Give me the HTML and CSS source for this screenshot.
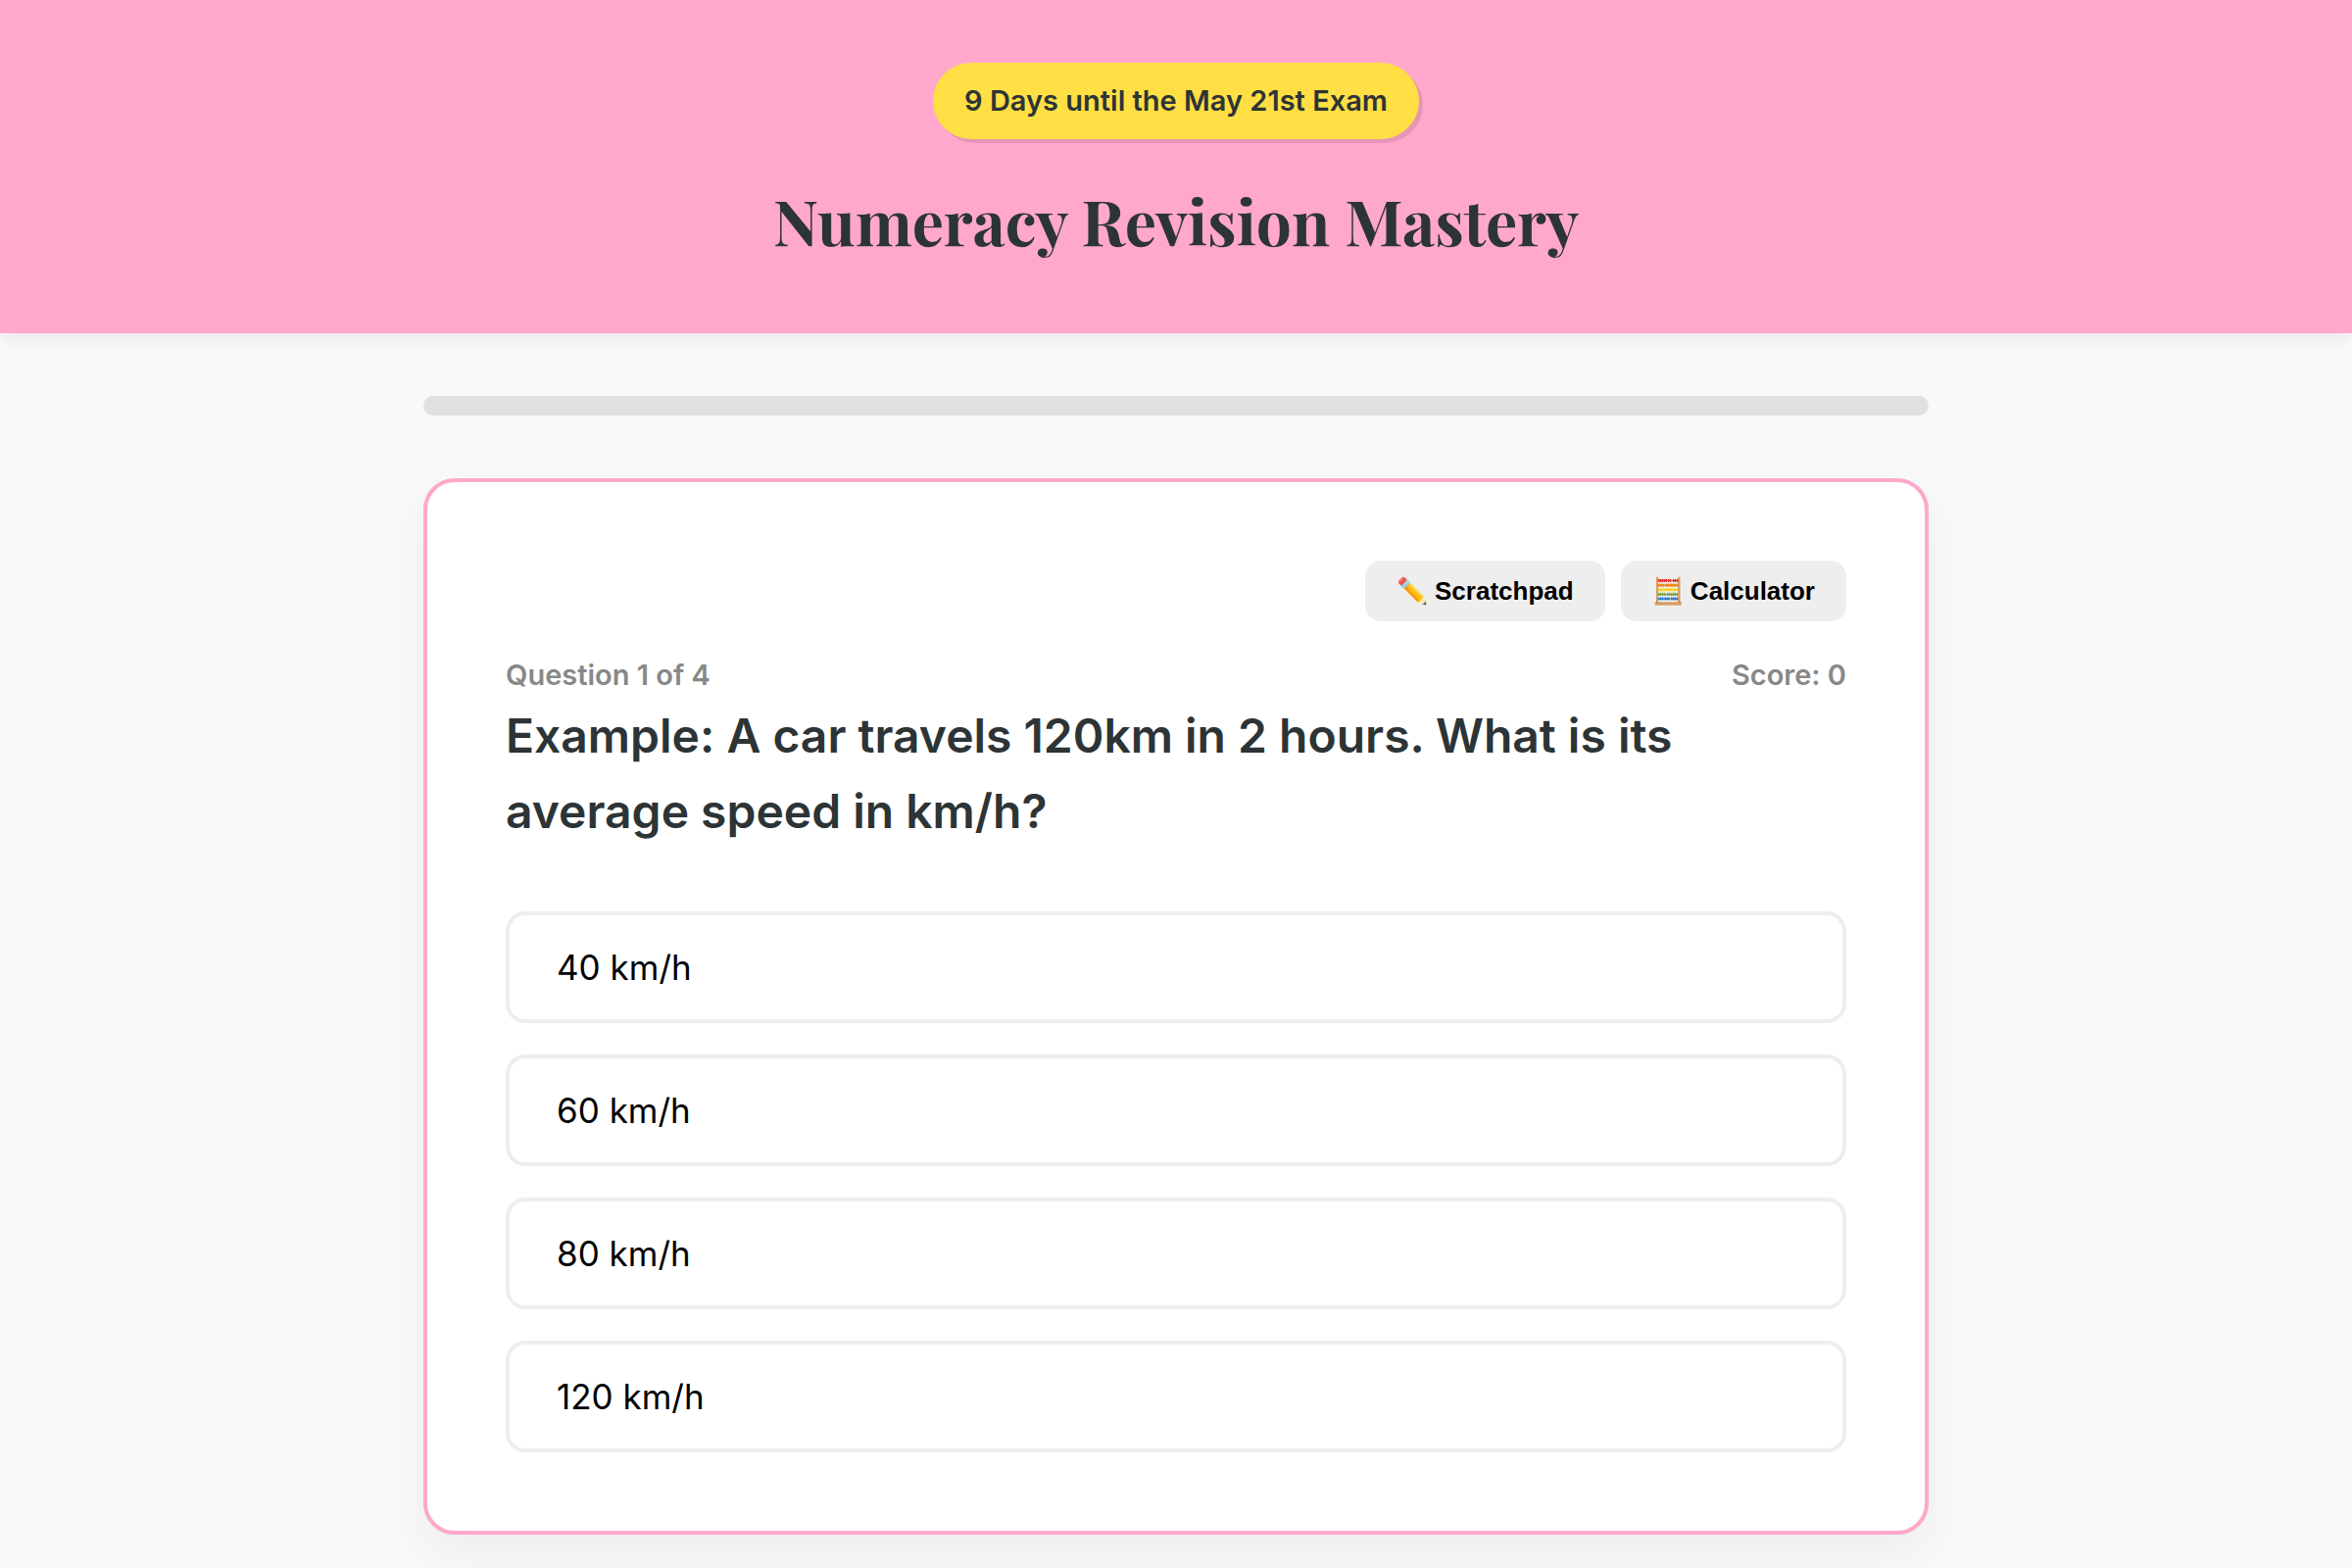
FILE: index.html
```
<!DOCTYPE html>
<html lang="en">
<head>
  <meta charset="UTF-8">
  <meta name="viewport" content="width=device-width, initial-scale=1.0">
  <title>Numeracy Revision Mastery</title>
  <link rel="stylesheet" href="styles.css">
</head>
<body>

  <header>
    <div class="countdown">9 Days until the May 21st Exam</div>
    <h1>Numeracy Revision Mastery</h1>
  </header>

  <main class="container">

    <div class="progress-bar" role="progressbar" aria-label="Quiz progress" aria-valuenow="0" aria-valuemin="0" aria-valuemax="4">
      <div class="progress-fill" style="width: 0%;"></div>
    </div>

    <section class="quiz-card">

      <div class="tools">
        <button type="button" class="tool-btn">✏️ Scratchpad</button>
        <button type="button" class="tool-btn">🧮 Calculator</button>
      </div>

      <div class="quiz-meta">
        <span>Question 1 of 4</span>
        <span>Score: 0</span>
      </div>

      <h2 class="question">Example: A car travels 120km in 2 hours. What is its average speed in km/h?</h2>

      <div class="options">
        <button type="button" class="option-btn">40 km/h</button>
        <button type="button" class="option-btn">60 km/h</button>
        <button type="button" class="option-btn">80 km/h</button>
        <button type="button" class="option-btn">120 km/h</button>
      </div>

    </section>

  </main>

</body>
</html>
```
FILE: styles.css
```
:root {
  --pink: #ffa8cb;
  --yellow: #ffdf43;
  --dark: #2d3436;
  --light: #f9f9f9;
}

* {
  box-sizing: border-box;
}

body {
  margin: 0;
  min-height: 100vh;
  font-family: 'Inter', sans-serif;
  background-color: var(--light);
  color: var(--dark);
}

header {
  background-color: var(--pink);
  padding: 64px 32px;
  display: flex;
  flex-direction: column;
  align-items: center;
  gap: 32px;
  text-align: center;
  box-shadow: 0 8px 12px rgba(0, 0, 0, 0.05);
}

.countdown {
  background-color: var(--yellow);
  padding: 16px 32px;
  border-radius: 40px;
  font-size: 29px;
  font-weight: 600;
  line-height: 46px;
  box-shadow: 4px 4px 0 rgba(0, 0, 0, 0.1);
}

h1 {
  font-family: 'Playfair Display', 'Liberation Serif', serif;
  font-size: 64px;
  font-weight: 700;
  line-height: 102px;
  margin: 0;
}

.container {
  max-width: 1600px;
  margin: 0 auto;
  padding: 64px 32px 32px;
}

.progress-bar {
  height: 20px;
  background-color: #e0e0e0;
  border-radius: 10px;
  margin-bottom: 64px;
  overflow: hidden;
}

.progress-fill {
  height: 100%;
  background-color: var(--yellow);
  transition: width 0.3s;
}

.quiz-card {
  background-color: #fff;
  border: 4px solid var(--pink);
  border-radius: 32px;
  padding: 80px;
  box-shadow: 0 20px 50px rgba(0, 0, 0, 0.05);
}

.tools {
  display: flex;
  flex-wrap: wrap;
  justify-content: flex-end;
  gap: 16px;
  margin-bottom: 32px;
}

.tool-btn {
  font-family: 'Liberation Sans', Arial, sans-serif;
  font-size: 26px;
  font-weight: 700;
  line-height: 30px;
  color: #000;
  background-color: #eee;
  border: none;
  border-radius: 16px;
  padding: 16px 32px;
  cursor: pointer;
}

.quiz-meta {
  display: flex;
  justify-content: space-between;
  font-size: 29px;
  font-weight: 600;
  line-height: 46px;
  color: #888;
}

.question {
  font-size: 48px;
  font-weight: 600;
  line-height: 77px;
  margin: 0 0 64px;
}

.options {
  display: grid;
  gap: 32px;
}

.option-btn {
  font-family: inherit;
  font-size: 35px;
  line-height: 42px;
  text-align: left;
  color: #000;
  background-color: #fff;
  border: 4px solid #eee;
  border-radius: 20px;
  padding: 32px 48px;
  cursor: pointer;
  transition: border-color 0.2s;
}

.option-btn:hover {
  border-color: var(--pink);
}
```
